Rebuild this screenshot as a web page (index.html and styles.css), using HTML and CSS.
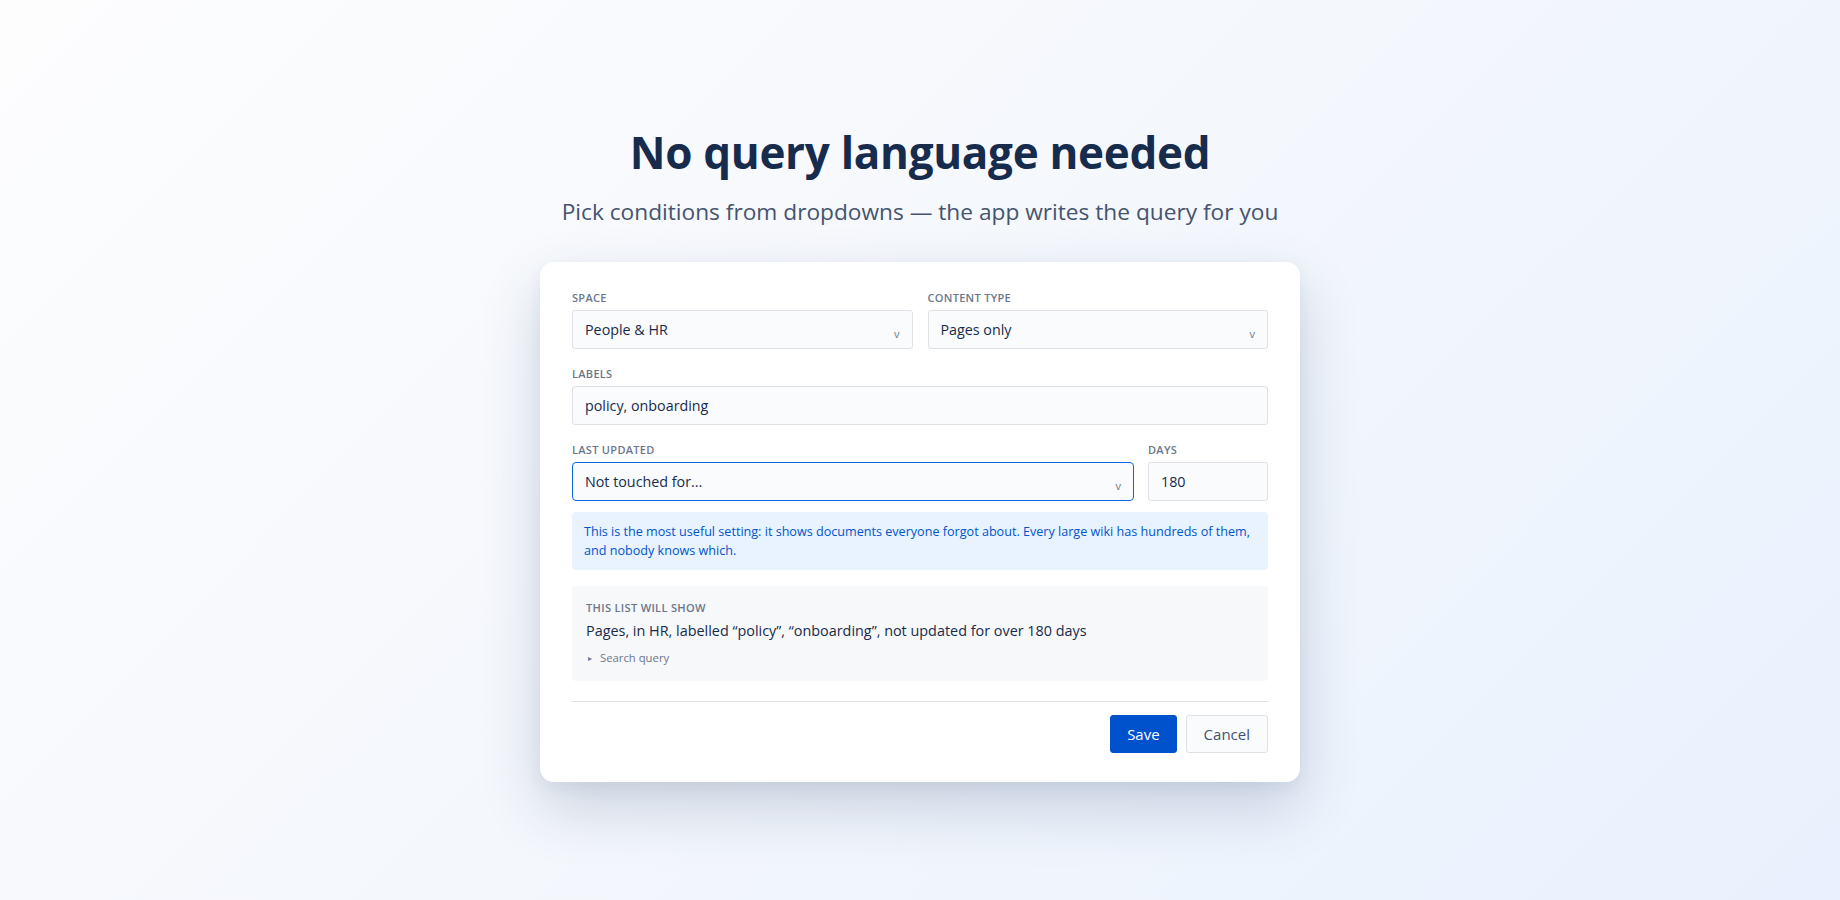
FILE: index.html
```html
<!DOCTYPE html>
<html lang="en">
<head>
<meta charset="utf-8">
<title>No query language needed</title>
<link rel="stylesheet" href="styles.css">
</head>
<body>
<main class="page">
  <h1 class="title">No query language needed</h1>
  <p class="subtitle">Pick conditions from dropdowns — the app writes the query for you</p>

  <section class="card">
    <div class="row row-two">
      <div class="field">
        <div class="label">Space</div>
        <div class="control select"><span class="value">People &amp; HR</span><span class="chev">v</span></div>
      </div>
      <div class="field">
        <div class="label">Content type</div>
        <div class="control select"><span class="value">Pages only</span><span class="chev">v</span></div>
      </div>
    </div>

    <div class="row">
      <div class="field">
        <div class="label">Labels</div>
        <div class="control"><span class="value">policy, onboarding</span></div>
      </div>
    </div>

    <div class="row row-days">
      <div class="field">
        <div class="label">Last updated</div>
        <div class="control select focused"><span class="value">Not touched for...</span><span class="chev">v</span></div>
      </div>
      <div class="field">
        <div class="label">Days</div>
        <div class="control"><span class="value">180</span></div>
      </div>
    </div>

    <div class="info">This is the most useful setting: it shows documents everyone forgot about. Every large wiki has hundreds of them, and nobody knows which.</div>

    <div class="summary">
      <div class="summary-label">This list will show</div>
      <div class="summary-text">Pages, in HR, labelled “policy”, “onboarding”, not updated for over 180 days</div>
      <div class="summary-query"><span class="tri">▸</span>Search query</div>
    </div>

    <div class="actions">
      <button class="btn btn-primary" type="button">Save</button>
      <button class="btn btn-secondary" type="button">Cancel</button>
    </div>
  </section>
</main>
</body>
</html>
```

FILE: styles.css
```css
* { box-sizing: border-box; }

html, body { height: 100%; }

body {
  margin: 0;
  font-family: "Open Sans", "Noto Sans", "Liberation Sans", sans-serif;
  color: #172b4d;
  background: linear-gradient(135deg, #fdfdfe 0%, #f4f7fc 50%, #e9f1fe 100%);
  min-height: 900px;
}

.page {
  display: flex;
  flex-direction: column;
  align-items: center;
  padding-top: 124px;
}

.title {
  margin: 0;
  font-size: 44px;
  line-height: 56px;
  font-weight: 700;
  color: #172b4d;
  letter-spacing: -0.3px;
}

.subtitle {
  margin: 17px 0 0;
  font-size: 22.7px;
  line-height: 30px;
  color: #44546f;
}

.card {
  margin-top: 35px;
  width: 760px;
  background: #ffffff;
  border-radius: 14px;
  padding: 29px 32px 29px;
  box-shadow: 0 26px 60px rgba(40, 64, 110, 0.20), 0 6px 16px rgba(40, 64, 110, 0.06);
}

.row { display: grid; grid-template-columns: 1fr; gap: 15px; margin-bottom: 18px; }
.row-two { grid-template-columns: 1fr 1fr; }
.row-days { grid-template-columns: 1fr 120px; gap: 14px; margin-bottom: 11px; }

.label {
  font-size: 11px;
  line-height: 14px;
  font-weight: 600;
  text-transform: uppercase;
  letter-spacing: 0.3px;
  color: #6b778c;
  margin-bottom: 5px;
}

.control {
  height: 39px;
  border: 1px solid #dfe1e6;
  border-radius: 3px;
  background: #fafbfc;
  display: flex;
  align-items: center;
  justify-content: space-between;
  padding: 0 12px;
  font-size: 14.3px;
  color: #172b4d;
}

.control.focused {
  border: 1.5px solid #0c66e4;
  border-radius: 4px;
}

.chev {
  font-size: 11px;
  color: #6b778c;
  padding-top: 8px;
}

.info {
  background: #e9f2ff;
  border-radius: 4px;
  padding: 10px 11px 10px 12px;
  font-size: 12.6px;
  line-height: 19px;
  color: #0055cc;
}

.summary {
  margin-top: 16px;
  background: #f7f8f9;
  border-radius: 4px;
  padding: 15px 14px 15px;
}

.summary-label {
  font-size: 11.1px;
  line-height: 14px;
  font-weight: 600;
  text-transform: uppercase;
  letter-spacing: 0.3px;
  color: #6b778c;
}

.summary-text {
  margin-top: 6px;
  font-size: 14.4px;
  line-height: 20px;
  color: #172b4d;
}

.summary-query {
  margin-top: 9px;
  font-size: 11.3px;
  line-height: 16px;
  color: #6b778c;
}

.tri { font-size: 8px; margin-right: 8px; vertical-align: 1px; margin-left: 2px; }

.actions {
  margin-top: 20px;
  border-top: 1px solid #dfe1e6;
  padding-top: 13px;
  display: flex;
  justify-content: flex-end;
  gap: 9px;
}

.btn {
  height: 38px;
  font-family: inherit;
  font-size: 15px;
  border-radius: 3px;
  padding: 0 16px;
  cursor: pointer;
}

.btn-primary {
  background: #0052cc;
  color: #ffffff;
  border: 1px solid #0052cc;
}

.btn-secondary {
  background: #fafbfc;
  color: #42526e;
  border: 1px solid #dfe1e6;
  padding: 0 17px;
}
```
